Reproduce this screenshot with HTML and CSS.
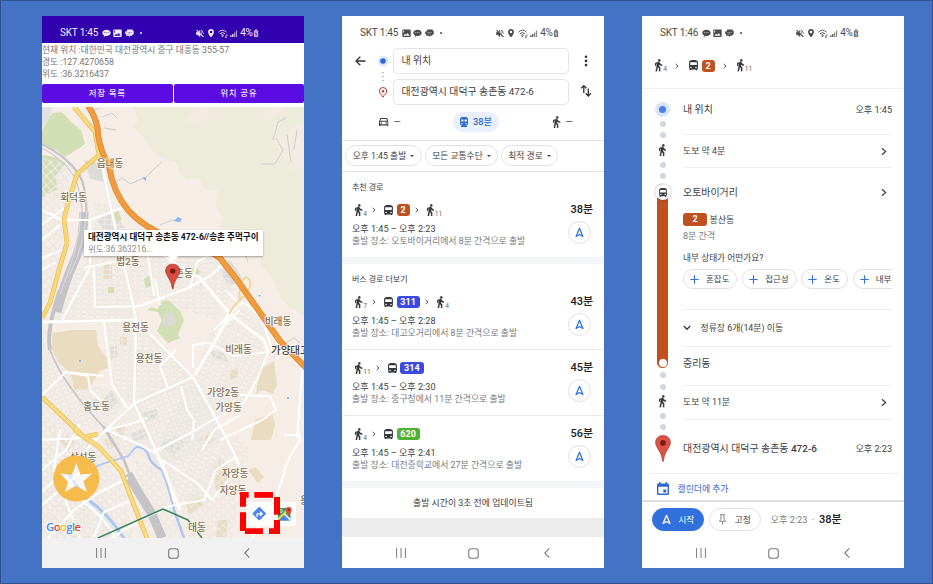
FILE: index.html
```html
<!DOCTYPE html>
<html lang="ko">
<head>
<meta charset="utf-8">
<title>길찾기</title>
<link rel="stylesheet" href="styles.css">
</head>
<body>
<svg class="defs" width="0" height="0" aria-hidden="true">
  <symbol id="walk" viewBox="6 1 13 22"><path d="M13.5 5.5c1.1 0 2-.9 2-2s-.9-2-2-2-2 .9-2 2 .9 2 2 2zM9.8 8.9L7 23h2.1l1.8-8 2.1 2v6h2v-7.5l-2.1-2 .6-3C14.8 12 16.8 13 19 13v-2c-1.9 0-3.5-1-4.3-2.4l-1-1.6c-.4-.6-1-1-1.7-1-.3 0-.5.1-.8.1L6 8.3V13h2V9.6l1.8-.7" stroke="currentColor" stroke-width=".5"/></symbol>
  <symbol id="bus" viewBox="4 2 16 19"><path d="M4 16c0 .88.39 1.67 1 2.22V20c0 .55.45 1 1 1h1c.55 0 1-.45 1-1v-1h8v1c0 .55.45 1 1 1h1c.55 0 1-.45 1-1v-1.78c.61-.55 1-1.34 1-2.22V6c0-3.5-3.58-4-8-4s-8 .5-8 4v10zm3.5 1c-.83 0-1.5-.67-1.5-1.5S6.67 14 7.5 14s1.5.67 1.5 1.5S8.33 17 7.5 17zm9 0c-.83 0-1.5-.67-1.5-1.5s.67-1.5 1.5-1.5 1.5.67 1.5 1.5-.67 1.5-1.5 1.5zm1.5-6H6V6h12v5z"/></symbol>
  <symbol id="car" viewBox="3 5 18 16"><path d="M18.92 6.01C18.72 5.42 18.16 5 17.5 5h-11c-.66 0-1.21.42-1.42 1.01L3 12v8c0 .55.45 1 1 1h1c.55 0 1-.45 1-1v-1h12v1c0 .55.45 1 1 1h1c.55 0 1-.45 1-1v-8l-2.08-5.99zM6.85 7h10.29l1.08 3.11H5.77L6.85 7zM19 17H5v-5h14v5z"/><circle cx="7.5" cy="14.5" r="1.5"/><circle cx="16.5" cy="14.5" r="1.5"/></symbol>
  <symbol id="train" viewBox="4 2 16 20"><path fill-rule="evenodd" d="M12 2c-4 0-8 .5-8 4v9.500C4 17.400 5.600 19 7.500 19L6 20.500v1.500h12v-1.500L16.500 19c1.900 0 3.500-1.600 3.500-3.500V6c0-3.500-4-4-8-4zM7.800 17a1.600 1.600 0 1 1 0-3.200 1.600 1.600 0 0 1 0 3.200zM11 11H6V7h5zm2 0V7h5v4zm3.200 6a1.600 1.600 0 1 1 0-3.200 1.600 1.600 0 0 1 0 3.200z"/></symbol>
  <symbol id="chev" viewBox="0 0 6 8"><path d="M1 .8 4.600 4 1 7.200" fill="none" stroke="currentColor" stroke-width="1.300"/></symbol>
  <symbol id="nav" viewBox="0 0 10 12"><path d="M5 1.300 1.200 10.500 5 8.300l3.800 2.200z" fill="none" stroke="currentColor" stroke-width="1.400" stroke-linejoin="round"/></symbol>
  <symbol id="chat" viewBox="0 0 10 9"><path d="M5 .5C2.300.5.3 2 .3 4c0 1.300.8 2.300 2.100 2.900L2 8.800l2-1.400 1 .1c2.700 0 4.700-1.500 4.700-3.500S7.700.5 5 .5z"/><path class="cut" d="M2.200 3.800h5.600" fill="none" stroke-width=".6" stroke-dasharray="1.300 .7"/></symbol>
  <symbol id="pic" viewBox="0 0 9 8"><path fill-rule="evenodd" d="M1 .3h7q.7 0 .7.700v6q0 .7-.7.700H1Q.3 7.700.3 7V1Q.3.300 1 .3zM1.300 6.500h6.300L5.700 3.700 4.200 5.600 3 4.400zM1.300 1.300v2.400L2.300 2.500 1.900 1.300z"/></symbol>
  <symbol id="msg" viewBox="0 0 10 9"><path d="M2.500.3h6.300L8.300 1.800h1.400v4H8.500L7.800 7.300H5.500l-.8 1.400L4 7.300H1.300V5.300H.2V2.500h1.500z"/><path class="cut" d="M2.500 3.600h5M3 5.300h3" fill="none" stroke-width=".4"/></symbol>
  <symbol id="mute" viewBox="2 2 20 20"><path d="M4.300 3 3 4.300 7.700 9H3v6h4l5 5v-6.700l5.500 5.500L19.700 21 21 19.700 12 10.700zM12 4 9.900 6.100 12 8.200z" stroke="currentColor" stroke-width="1.200"/><path d="M14 8v3l2.500 2.500C16.900 11 16 9 14 8zM14 3.200v2c3 .9 5 3.500 5 6.800l1.500 2C22 9 19 4.500 14 3.200z"/></symbol>
  <symbol id="place" viewBox="5 2 14 20"><path fill-rule="evenodd" d="M12 2C8.130 2 5 5.130 5 9c0 5.250 7 13 7 13s7-7.750 7-13c0-3.870-3.130-7-7-7zm0 10a3 3 0 1 1 0-6 3 3 0 0 1 0 6z"/></symbol>
  <symbol id="wifi" viewBox="0 0 10 9"><path d="M.5 3.200Q4.500-.8 8.500 3.200M1.900 4.800q2.600-2.400 5.200 0M3.200 6.300q1.300-1.200 2.600 0" fill="none" stroke="currentColor" stroke-width=".9"/><circle cx="4.500" cy="7.300" r=".8"/><path d="M7 8.700 7.800 6l.9 2.700zM8.300 5.500h1.300L9 8z"/></symbol>
  <symbol id="signal" viewBox="0 0 9 9"><path d="M.3 6.500h1.400v2H.3zM2.400 5h1.400v3.500H2.400z"/><path d="M4.500 3.300h1.400v5.200H4.500zM6.600 1H8v7.500H6.600z" opacity=".65"/></symbol>
  <symbol id="batt" viewBox="0 0 6 9"><path d="M2 .5h2v1h1.300v7H.7v-7H2z" opacity=".75"/><path class="cut" d="M3.300 2.500 2.300 5h1.500L2.800 7.500" fill="none" stroke-width=".6"/></symbol>
  <symbol id="recents" viewBox="0 0 10 10"><path d="M.6 0v10M5 0v10M9.400 0v10" stroke="currentColor" stroke-width="1"/></symbol>
  <symbol id="home" viewBox="0 0 11 11"><rect x=".7" y=".7" width="9.600" height="9.600" rx="2.600" fill="none" stroke="currentColor" stroke-width="1.100"/></symbol>
  <symbol id="back" viewBox="0 0 6 10"><path d="M5.300.4.8 5l4.500 4.600" fill="none" stroke="currentColor" stroke-width="1.100"/></symbol>
  <symbol id="plus" viewBox="0 0 9 9"><path d="M4.500.3v8.400M.3 4.500h8.400" stroke="currentColor" stroke-width="1.200"/></symbol>
  <symbol id="pin" viewBox="0 0 15 26"><path d="M7.500.4C3.400.4.4 3.400.4 7.300c0 5 5.700 8 6.700 17.900h.8c1-9.900 6.700-12.900 6.700-17.900 0-3.900-3-6.900-7.100-6.900z" stroke-width=".7"/><circle cx="7.500" cy="7.600" r="2.700" fill="#741c14" stroke="none"/></symbol>
</svg>

<main class="board">
  <section class="phone">
    <header class="status status-dark">
      <span class="carrier">SKT 1:45</span>
      <svg class="s-ico"><use href="#chat"/></svg><svg class="s-ico"><use href="#pic"/></svg><svg class="s-ico"><use href="#msg"/></svg><i class="s-dot"></i>
      <span class="s-right"><svg class="w8"><use href="#mute"/></svg><svg class="w6"><use href="#place"/></svg><svg class="w10"><use href="#wifi"/></svg><svg class="w8 sig"><use href="#signal"/></svg><b>4%</b><svg class="w6 bat"><use href="#batt"/></svg></span>
    </header>
    <div class="where"><p>현재 위치 :대한민국 대전광역시 중구 대흥동 355-57</p><p>경도 :127.4270658</p><p>위도 :36.3216437</p></div>
    <div class="actions"><button>저장 목록</button><button>위치 공유</button></div>
    <div class="map">
      <svg class="map-art" viewBox="42 107 262 431">
        <defs>
          <pattern id="g1" width="7" height="5" patternUnits="userSpaceOnUse" patternTransform="rotate(2)"><path d="M0 .7h7M.7 0v5" stroke="#d6d1ca" stroke-width="1.200"/><path d="M0 .7h7M.7 0v5" stroke="#fff" stroke-width=".6"/></pattern>
          <pattern id="g2" width="6" height="5" patternUnits="userSpaceOnUse" patternTransform="rotate(-22)"><path d="M0 .7h6M.7 0v5" stroke="#d6d1ca" stroke-width="1.200"/><path d="M0 .7h6M.7 0v5" stroke="#fff" stroke-width=".6"/></pattern>
          <pattern id="g3" width="6" height="7" patternUnits="userSpaceOnUse" patternTransform="rotate(-42)"><path d="M0 .7h6M.7 0v7" stroke="#d6d1ca" stroke-width="1.200"/><path d="M0 .7h6M.7 0v7" stroke="#fff" stroke-width=".6"/></pattern>
          <pattern id="g4" width="7" height="5" patternUnits="userSpaceOnUse" patternTransform="rotate(28)"><path d="M0 .7h7M.7 0v5" stroke="#d6d1ca" stroke-width="1.200"/><path d="M0 .7h7M.7 0v5" stroke="#fff" stroke-width=".6"/></pattern>
        </defs>
        <rect x="42" y="107" width="262" height="431" fill="#f5ede6"/>
        <path fill="#edebda" d="M133 107 138 120 134 128 146 140 152 150 163 158 176 162 180 174 188 180 199 178 205 190 218 190 216 207 223 218 218 227 250 232 258 245 262 265 274 280 279 296 290 308 304 314V107z"/>
        <path fill="#f3ebe2" d="M274 140 304 120V165L292 172 284 158zM286 107l-16 14-8-2 6-12zM216 107l-6 12-18 4-8 0 12-16z"/>
        <path fill="#d2dfb5" d="M42 130 52 113 62 112 71 122 81 130 85 144 76 150 65 157 56 150 42 143zM42 155 55 157 66 163 56 175 57 190 48 194 42 198z"/>
        <path fill="#e2e0e3" d="M42 107h10l-3 12-7 8z"/>
        <path fill="#eadcc0" d="M52 333 70 330 84 330 96 330 98 346 107 358 108 368 100 371 92 384 88 390 74 390 71 374 58 362 52 350zM120 337h7v8h-7zM103 264h9v16h-9zM230 371l8-4 0 10-8 3zM259 370 274 361 277 385 273 394 262 390 256 394zM255 420 272 413 275 425 271 440h-20zM117 426h8l-2 12h-6zM196 440l12-8 8 6-8 8zM213 473 220 456 229 470 224 492 216 489zM248 470l8-3 8 10-6 6zM186 503l14-6 3 8-14 10zM218 520h10l-2 17h-10zM58 440l10-5 8 8-8 8zM104 440l8-4 5 8-8 6z"/>
        <path fill="#dedcd9" d="M97 220 114 212 125 228 104 230zM220 270l10-10 14 20-16 6zM84 160l20 4 2 18-16-3zM210 350l14 3 5 9-16-4zM103 400l8-10 7 12-8 8zM143 413l14-4 1 9-14 5zM130 434l16-6 3 10-14 3zM84 403l14-6 4 8-16 4zM160 445l14-10 12 8-14 14zM110 347l7-2 1 12-7 2z"/>
        <path fill="url(#g3)" d="M42 158 72 165 66 218 58 290 42 305zM42 400 92 440 120 470 134 538H42z"/>
        <path fill="url(#g1)" d="M94 200 112 208 126 230 165 245 220 258 234 290 215 320 140 295 130 318 42 322 56 300 64 285 95 250z"/>
        <path fill="url(#g1)" d="M103 322 138 322 193 377 135 403 116 398z"/>
        <path fill="url(#g2)" d="M42 330 52 326 54 358 72 376 72 390 104 386 124 402 106 430 70 425 42 390zM135 404 193 379 214 418 228 440 160 470 140 455 118 465 100 440z"/>
        <path fill="url(#g4)" d="M210 330 238 306 262 325 270 350 258 380 240 410 215 416 195 378zM193 378 214 420 228 440 222 470 200 500 180 500 162 460 160 440z"/>
        <path fill="url(#g3)" d="M136 460 160 470 182 538H140zM182 500 220 455 236 430 250 450 232 538H190zM42 418 84 440 100 450 112 538H42z" opacity=".9"/>
        <path fill="#d2dfb5" d="M147 310 151 307 158 309 160 302 168 300 180 311 184 320 178 334 180 338 168 343 157 331 162 320 158 312zM112 212l6-2 4 10-5 2zM108 287h6v6h-6zM144 279l6-3 2 10-6 2zM188 273l7-6 6 5-7 6z"/>
        <path fill="#dcdad7" d="M163 315 172 311 176 323 164 328z"/>
        <g fill="none" stroke="#c4c3c7">
          <path d="M42 144Q66 156 79 174 88 190 86 222" stroke-width="2.200"/><path d="M42 148Q62 158 74 176 82 192 83 224" stroke-width="1"/>
          <path d="M84 212Q84 240 74 262 64 284 57 312" stroke-width="9"/><path d="M60 290Q46 330 50 350" stroke-width="4"/><path d="M50 350Q62 384 110 434" stroke-width="1.600"/>
          <path d="M103 426 124 460 134 486" stroke-width="2.600"/><path d="M128 474 137 490 152 514 162 538" stroke-width="9"/>
        </g>
        <g fill="none" stroke="#dedce0" stroke-width="1"><path d="M87 210Q84 246 70 274M81 212Q80 246 60 294"/></g>
        <g fill="none" stroke="#cbcac8" stroke-width=".9">
          <path d="M112 184 122 178 130 184 146 177 155 168 162 162M102 117 112 113 117 118M104 128 116 130M273 140 278 122 286 118M276 138 283 150 275 164 262 164M287 134 291 162M297 130 294 150M90 112 100 108M160 225 172 220 182 222M236 246 244 250 248 262M284 344 294 338 300 343"/>
        </g>
        <g fill="none" stroke="#a9c6f5" stroke-width="2.400"><path d="M136 447Q144 446 148 454 150 464 162 470 170 490 174 510L184 538" /><path d="M68 472Q78 490 91 502 108 514 124 538" stroke-width="3"/><path d="M80 474 102 464 128 456 136 447" stroke-width="1.600"/></g>
        <path fill="#8ab4f8" d="M142 178l4-1v4zM174 221l4-4 4 2-3 3zM258 295l3 0-1 2zM79 360h2v2h-2zM287 397h2v2h-2z"/>
        <g fill="none" stroke="#d9d4cd" stroke-width="3.200">
          <path d="M42 322 136 320 193 377 135 403 106 430 76 460 42 492M193 377 214 415 236 457M136 320 131 295 118 240 106 185 102 162M136 320 134 403 155 448"/>
        </g>
        <g fill="none" stroke="#fff" stroke-linejoin="round">
          <path stroke-width="2.800" d="M42 322 136 320 193 377 135 403 106 430 76 460 42 492M193 377 214 415 236 457 242 475M195 375 213 345 232 310M136 320 131 295 118 240 106 185 102 162M136 320 134 403 155 448 180 510M146 239 172 262 200 278 229 313 250 330 264 340 268 352"/>
          <path stroke-width="2" d="M64 220 90 220 122 208M42 210 62 220 M42 225 64 208M42 240 60 225M42 258 62 250M42 270 56 262M90 220 90 268 62 320M84 268 132 258 152 244M94 268 95 307 140 306 188 288 210 276 226 262M146 244 154 296M160 305 155 280M190 288 197 262 222 248M104 322 112 384 127 408M176 350 160 366 168 388M181 386 187 410 194 420 192 440M193 368 193 345 209 343 234 356 268 352M268 352 258 378 244 402 192 432 154 452 130 440 106 430M42 395 66 372 88 376 90 390 104 404M66 372 104 376M240 302 246 304 262 318 272 350M225 290 242 306M214 330 238 306M218 332 240 310M42 440 84 438 M106 430 130 424 148 418M276 350 298 345 302 372 300 400 297 438M284 435h16M284 345 276 360M298 430 300 440 288 460 278 492 262 520 252 538M236 457 216 470 204 500 170 506 140 520 112 538M174 502 168 480 162 460M162 460 196 482 212 500 236 470M42 505 72 480 90 462M48 538 74 510 100 492 128 478M60 430 54 470 80 538M80 424 66 450 42 470M220 440 262 420 276 410 270 396 240 395M202 450 214 430 240 415M94 537 104 512 132 500"/>
        </g>
        <path d="M66 478Q76 497 91 508 104 518 116 538" fill="none" stroke="#fff" stroke-width="2"/>
        <g fill="none" stroke-linejoin="round">
          <path stroke="#e5b95b" stroke-width="4.600" d="M74 107 95 132 99 155 77 174 69 200 64 219 67 243 59 270 50 303 42 318M42 397 84 437 99 447 121 471 133 503 147 538M84 437 98 434M74 430 84 437"/>
          <path stroke="#fad775" stroke-width="3.400" d="M74 107 95 132 99 155 77 174 69 200 64 219 67 243 59 270 50 303 42 318M42 397 84 437 99 447 121 471 133 503 147 538M84 437 98 434M74 430 84 437"/>
          <path stroke="#f7e2a0" stroke-width=".8" d="M74 107 95 132 99 155M42 397 84 437 99 447 121 471 133 503 147 538"/>
          <path stroke="#edd795" stroke-width="1.800" d="M229 314Q236 302 247 294M240 302q-2-20 6-25 8 4 2 14"/>
          <path stroke="#d98631" stroke-width="6" d="M87 104Q98 120 98 134 100 150 109 166 113 192 128 210 142 226 170 238 205 247 220 258 238 280 254 304L280 341 306 368"/>
          <path stroke="#f29b3c" stroke-width="4.600" d="M87 104Q98 120 98 134 100 150 109 166 113 192 128 210 142 226 170 238 205 247 220 258 238 280 254 304L280 341 306 368"/>
          <path stroke="#38855f" stroke-width="1.400" d="M98 538 163 509 188 520 202 538"/>
        </g>
        <g class="lbl">
          <text x="110" y="167">읍내동</text><text x="73.500" y="200.500">회덕동</text><text x="128" y="265">법2동</text><text x="179.500" y="276.500">송촌동</text>
          <text x="135.500" y="331">용전동</text><text x="149" y="361.800">용전동</text><text x="278" y="324.500">비래동</text><text x="238.500" y="352.700">비래동</text>
          <text class="big" x="271" y="353.500">가양대고</text><text x="223" y="396">가양2동</text><text x="228.500" y="411">가양동</text><text x="96.500" y="410">홍도동</text>
          <text x="83" y="461">삼성동</text><text x="235" y="477">자양동</text><text x="233" y="493.500">자양동</text><text x="197" y="531">대동</text><text x="304.500" y="504">용</text>
        </g>
        <path d="M76 463 80 474.500 92 474.500 83 482 87 492 76 485.500 65 492 69 482 60 474.500 72 474.500z" fill="#fff" opacity=".6"/>
        <path fill-rule="evenodd" fill="#f5bc4c" d="M76.300 455.500a23 23 0 1 0 .1 0zM76.300 463 80.500 474.500 92 473.500 83.500 481.500 87 492 75.500 486 65 492 68 482 60.500 473.500 72 474.500z"/>
        <g class="google"><text x="46" y="530.500"><tspan fill="#4285f4">G</tspan><tspan fill="#ea4335">o</tspan><tspan fill="#fbbc05">o</tspan><tspan fill="#4285f4">g</tspan><tspan fill="#34a853">l</tspan><tspan fill="#ea4335">e</tspan></text></g>
        <use href="#pin" x="165" y="263.500" width="15.500" height="26" fill="#d94c3e" stroke="#a93226"/>
        <rect x="247" y="502" width="49" height="24" fill="#fff" opacity=".88"/>
        <rect x="253.900" y="508.900" width="10" height="10" rx="1" fill="#4a82ee" transform="rotate(45 259.400 514.200)"/>
        <path d="M257 517v-3.200h4.500M260 511.600l2.300 2.200-2.300 2.200" fill="none" stroke="#fff" stroke-width="1.200"/>
        <g><rect x="278" y="508" width="12.500" height="12.500" rx="1" fill="#34a05c"/><path d="M279 520.500 284.500 514 290.500 520.500z" fill="#4a82ee"/><path d="M278 519.500 288 509.500" stroke="#fbd24a" stroke-width="2"/><path d="M284.500 514 290.500 520" stroke="#e8eaed" stroke-width="1.800"/><path d="M288.700 507a3 3 0 0 1 3 3c0 2.500-2.600 3.800-3 6.500-.4-2.700-3-4-3-6.500a3 3 0 0 1 3-3z" fill="#dd4b3e"/><circle cx="288.700" cy="510" r="1" fill="#7c1d15"/><circle cx="281" cy="511" r="1.400" fill="none" stroke="#fff" stroke-width=".7"/></g>
        <path fill="#f00" d="M240 492h8.700v5.700H246V506.700h-6zM254.300 492H273v5.700H254.300zM274 497h6v17.700h-6zM280 520v14h-11v-5.700h5V520zM263 534H245v-3h-5V512.300h6v16h17z"/>
      </svg>
      <div class="bubble"><strong>대전광역시 대덕구 송촌동 472-6//송촌 주먹구이</strong><span>위도:36.363216...</span></div>
    </div>
    <footer class="sysnav grey"><svg class="n1"><use href="#recents"/></svg><svg class="n2"><use href="#home"/></svg><svg class="n3"><use href="#back"/></svg></footer>
  </section>

  <section class="phone">
    <header class="status">
      <span class="carrier">SKT 1:45</span>
      <svg class="s-ico"><use href="#pic"/></svg><svg class="s-ico"><use href="#chat"/></svg><svg class="s-ico"><use href="#msg"/></svg><i class="s-dot"></i>
      <span class="s-right"><svg class="w8"><use href="#mute"/></svg><svg class="w6"><use href="#place"/></svg><svg class="w10"><use href="#wifi"/></svg><svg class="w8 sig"><use href="#signal"/></svg><b>4%</b><svg class="w6 bat"><use href="#batt"/></svg></span>
    </header>
    <div class="search">
      <div class="ends">
        <svg class="arrow" viewBox="0 0 11 10"><path d="M10.500 5H1.200M5.300.8 1 5l4.300 4.200" fill="none" stroke="#333" stroke-width="1.300"/></svg>
        <svg class="marks" viewBox="0 0 12 50"><circle cx="6" cy="9" r="5.400" fill="#dfe9fc"/><circle cx="6" cy="9" r="2.800" fill="#2a66dc"/><path d="M6 20v1.300M6 24v1.300M6 28v1.300" stroke="#999" stroke-width="1.200"/><path d="M6 35.500a3.700 3.700 0 0 1 3.700 3.700c0 2.600-2.700 3.500-3.700 6-1-2.500-3.700-3.400-3.700-6A3.700 3.700 0 0 1 6 35.500z" fill="none" stroke="#c5372c" stroke-width="1"/><circle cx="6" cy="39.200" r="1.200" fill="#c5372c"/></svg>
        <div class="fields"><div class="field">내 위치</div><div class="field">대전광역시 대덕구 송촌동 472-6</div></div>
        <svg class="tools" viewBox="0 0 12 50"><circle cx="6" cy="4.700" r="1.300"/><circle cx="6" cy="8.900" r="1.300"/><circle cx="6" cy="13.100" r="1.300"/><path d="M3.800 41V33.500M1.200 36.300l2.600-2.700 2.600 2.700M8.300 36.500V44M5.700 41.300l2.600 2.700 2.600-2.700" fill="none" stroke="#333" stroke-width="1.300"/></svg>
      </div>
      <div class="modes"><span class="mode"><svg class="i-car"><use href="#car"/></svg>—</span><span class="mode on"><svg class="i-train"><use href="#train"/></svg>38분</span><span class="mode"><svg class="i-walk"><use href="#walk"/></svg>—</span></div>
    </div>
    <div class="filters"><span class="f1">오후 1:45 출발<i></i></span><span class="f2">모든 교통수단<i></i></span><span class="f3">최적 경로<i></i></span></div>
    <div class="card"><h2>추천 경로</h2>
      <div class="trip"><div class="info"><div class="legs"><svg class="i-walk"><use href="#walk"/></svg><sub>4</sub><svg class="i-chev"><use href="#chev"/></svg><svg class="i-bus"><use href="#bus"/></svg><b class="no rust">2</b><svg class="i-chev"><use href="#chev"/></svg><svg class="i-walk"><use href="#walk"/></svg><sub>11</sub></div><p class="when">오후 1:45 – 오후 2:23</p><p class="from">출발 장소: 오토바이거리에서 8분 간격으로 출발</p></div><div class="go"><strong>38분</strong><span><svg><use href="#nav"/></svg></span></div></div>
    </div>
    <div class="band"></div>
    <div class="card"><h2>버스 경로 더보기</h2>
      <div class="trip"><div class="info"><div class="legs"><svg class="i-walk"><use href="#walk"/></svg><sub>7</sub><svg class="i-chev"><use href="#chev"/></svg><svg class="i-bus"><use href="#bus"/></svg><b class="no blue">311</b><svg class="i-chev"><use href="#chev"/></svg><svg class="i-walk"><use href="#walk"/></svg><sub>4</sub></div><p class="when">오후 1:45 – 오후 2:28</p><p class="from">출발 장소: 대고오거리에서 8분 간격으로 출발</p></div><div class="go"><strong>43분</strong><span><svg><use href="#nav"/></svg></span></div></div>
    </div>
    <div class="card line">
      <div class="trip"><div class="info"><div class="legs"><svg class="i-walk"><use href="#walk"/></svg><sub>11</sub><svg class="i-chev"><use href="#chev"/></svg><svg class="i-bus"><use href="#bus"/></svg><b class="no blue">314</b></div><p class="when">오후 1:45 – 오후 2:30</p><p class="from">출발 장소: 중구청에서 11분 간격으로 출발</p></div><div class="go"><strong>45분</strong><span><svg><use href="#nav"/></svg></span></div></div>
    </div>
    <div class="card line">
      <div class="trip"><div class="info"><div class="legs"><svg class="i-walk"><use href="#walk"/></svg><sub>4</sub><svg class="i-chev"><use href="#chev"/></svg><svg class="i-bus"><use href="#bus"/></svg><b class="no green">620</b></div><p class="when">오후 1:45 – 오후 2:41</p><p class="from">출발 장소: 대전중학교에서 27분 간격으로 출발</p></div><div class="go"><strong>56분</strong><span><svg><use href="#nav"/></svg></span></div></div>
    </div>
    <div class="band"></div>
    <p class="updated">출발 시간이 3초 전에 업데이트됨</p>
    <div class="filler"></div>
    <footer class="sysnav"><svg class="n1"><use href="#recents"/></svg><svg class="n2"><use href="#home"/></svg><svg class="n3"><use href="#back"/></svg></footer>
  </section>

  <section class="phone">
    <header class="status">
      <span class="carrier">SKT 1:46</span>
      <svg class="s-ico"><use href="#chat"/></svg><svg class="s-ico"><use href="#pic"/></svg><svg class="s-ico"><use href="#msg"/></svg><i class="s-dot"></i>
      <span class="s-right"><svg class="w8"><use href="#mute"/></svg><svg class="w6"><use href="#place"/></svg><svg class="w10"><use href="#wifi"/></svg><svg class="w8 sig"><use href="#signal"/></svg><b>4%</b><svg class="w6 bat"><use href="#batt"/></svg></span>
    </header>
    <div class="summary legs wide"><svg class="i-walk"><use href="#walk"/></svg><sub>4</sub><svg class="i-chev"><use href="#chev"/></svg><svg class="i-bus"><use href="#bus"/></svg><b class="no rust">2</b><svg class="i-chev"><use href="#chev"/></svg><svg class="i-walk"><use href="#walk"/></svg><sub>11</sub></div>
    <div class="detail">
      <div class="rail">
        <span class="start"></span><i></i><i></i><svg class="i-walk"><use href="#walk"/></svg><i></i><i></i>
        <div class="bar"><span class="stop"><svg class="i-bus"><use href="#bus"/></svg></span><span class="end"></span></div>
        <i></i><i></i><svg class="i-walk"><use href="#walk"/></svg><i></i><i></i>
        <svg class="dest"><use href="#pin"/></svg>
      </div>
      <div class="steps">
        <div class="step s1"><strong>내 위치</strong><time>오후 1:45</time></div>
        <div class="step s2"><span>도보 약 4분</span><svg class="more"><use href="#chev"/></svg></div>
        <div class="step s3"><strong>오토바이거리</strong><svg class="more"><use href="#chev"/></svg></div>
        <div class="ride">
          <div class="bound"><b class="no rust">2</b>봉산동</div>
          <p class="every">8분 간격</p>
          <p class="ask">내부 상태가 어떤가요?</p>
          <div class="tags"><span><svg><use href="#plus"/></svg>혼잡도</span><span><svg><use href="#plus"/></svg>접근성</span><span><svg><use href="#plus"/></svg>온도</span><span class="last"><svg><use href="#plus"/></svg>내부</span></div>
        </div>
        <div class="step s4"><svg class="down" viewBox="0 0 8 6"><path d="m.7.900 3.300 3.400L7.300.900" fill="none" stroke="#333" stroke-width="1.300"/></svg><span>정류장 6개(14분) 이동</span></div>
        <div class="step s5"><strong>중리동</strong></div>
        <div class="step s6"><span>도보 약 11분</span><svg class="more"><use href="#chev"/></svg></div>
        <div class="step s7"><strong>대전광역시 대덕구 송촌동 <b>472-6</b></strong><time>오후 2:23</time></div>
      </div>
    </div>
    <div class="calendar"><svg viewBox="0 0 12 13"><path fill-rule="evenodd" d="M2 0h1.500v1.500h5V0H10v1.500h.8q1.200 0 1.200 1.200v9q0 1.200-1.200 1.200H1.200Q0 12.900 0 11.700v-9Q0 1.500 1.200 1.500H2zM1.400 4.700v6.800h9.200V4.700zM6.300 7.400h3v3h-3z"/></svg>캘린더에 추가</div>
    <div class="dock"><span class="btn primary"><svg><use href="#nav"/></svg>시작</span><span class="btn"><svg viewBox="0 0 8 11"><path d="M1.800.7h4.400M2.500.7v4.500L1 7.300h6L5.500 5.200V.7M4 7.300v3.400" fill="none" stroke="#80868b" stroke-width="1"/></svg>고정</span><span class="eta">오후 2:23 <em>·</em></span><strong>38분</strong></div>
    <footer class="sysnav"><svg class="n1"><use href="#recents"/></svg><svg class="n2"><use href="#home"/></svg><svg class="n3"><use href="#back"/></svg></footer>
  </section>
</main>
</body>
</html>
```
FILE: styles.css
```css
* { box-sizing: border-box; }
body, p, h2, button { margin: 0; padding: 0; }
body {
  width: 933px; height: 584px; overflow: hidden;
  background: #4472c4; color: #3c4043;
  font-family: Roboto, "Noto Sans CJK KR", sans-serif;
  font-size: 9px; line-height: 12px;
}
svg { display: block; flex: none; fill: currentColor; }
i, em { font-style: normal; }
.defs { position: absolute; }
.board { display: flex; gap: 38px; width: 933px; height: 584px; padding: 15px 41px; border: 1px solid #2f528f; }
.phone { width: 262px; height: 552px; background: #fff; display: flex; flex-direction: column; overflow: hidden; flex: none; }

.status { --cut: #fff; height: 27px; flex: none; display: flex; align-items: center; padding: 7px 0 0 18px; color: #4a4a4a; }
.status-dark { --cut: #3300b0; background: #3300b0; color: #f0ecfa; }
.cut { stroke: var(--cut); }
.carrier { width: 41.500px; font-size: 10px; letter-spacing: -.2px; white-space: nowrap; }
.s-ico { width: 9px; height: 8.500px; margin-right: 2.700px; }
.s-dot { width: 2px; height: 2px; border-radius: 50%; background: currentColor; margin-left: 3px; }
.s-right { display: flex; align-items: center; margin-left: auto; padding-right: 45px; }
.s-right b { font-weight: 400; font-size: 10px; letter-spacing: -.4px; margin-left: 2px; }
.w8 { width: 8px; height: 9px; } .w6 { width: 6px; height: 8.500px; margin-left: 3.500px; } .w10 { width: 10px; height: 9px; margin-left: 4.500px; }
.sig { margin-left: 2px; } .bat { margin-left: .5px; }

.where { height: 41px; flex: none; color: #757575; font-size: 8.750px; line-height: 12.400px; padding-top: .6px; white-space: nowrap; }
.actions { display: flex; gap: 1px; height: 23px; flex: none; }
.actions button { flex: 1; height: 19px; border: 0; border-radius: 2px; background: #5a0ce2; color: #ece4fb; font: 500 8.500px/19px Roboto, "Noto Sans CJK KR", sans-serif; letter-spacing: .7px; }
.map { position: relative; flex: none; height: 431px; }
.map-art { width: 262px; height: 431px; }
.lbl { font-family: Roboto, "Noto Sans CJK KR", sans-serif; font-size: 9.700px; fill: #796d58; text-anchor: middle; font-weight: 500; paint-order: stroke; stroke: #fffaf4; stroke-width: 1.500px; }
.lbl .big { font-size: 10.500px; fill: #463e35; text-anchor: start; }
.google { font: 600 11.500px/1 "Open Sans", sans-serif; letter-spacing: -.7px; paint-order: stroke; stroke: #fff; stroke-width: 1.500px; }
.bubble { position: absolute; left: 42px; top: 123px; width: 178.500px; height: 26px; padding: 2px 4px; background: #fff; box-shadow: 0 1px 2px rgba(0,0,0,.35); display: flex; flex-direction: column; line-height: 11.500px; white-space: nowrap; }
.bubble::after { content: ""; position: absolute; left: 84px; top: 26px; border: 5px solid transparent; border-top: 6px solid #fff; border-bottom: 0; }
.bubble strong { color: #111; font-size: 8.560px; }
.bubble span { color: #8c8c8c; font-size: 8.500px; }

.sysnav { margin-top: auto; height: 30px; flex: none; display: flex; align-items: center; padding-left: 53.500px; color: #7c7c7c; background: #fff; }
.grey { background: #f1f1f1; }
.n1 { width: 10px; height: 10px; } .n2 { width: 11px; height: 11px; margin-left: 62.500px; } .n3 { width: 6px; height: 10px; margin-left: 65px; }

.search { height: 98px; flex: none; border-bottom: 1px solid #e3e4e6; padding-top: 5px; }
.ends { display: flex; padding-left: 12.500px; }
.arrow { width: 11px; height: 10px; margin-top: 8px; }
.marks { width: 12px; height: 50px; margin: 4px 4px 0 11px; }
.fields { width: 176px; display: grid; gap: 5px; }
.field { height: 26px; border: 1.500px solid #e3e4e6; border-radius: 5px; padding-left: 8px; line-height: 24px; font-size: 9.900px; white-space: nowrap; }
.tools { width: 12px; height: 50px; margin: 4px 0 0 11.500px; fill: #333; }
.modes { display: flex; align-items: center; height: 20px; margin-top: 7px; padding-left: 37px; }
.mode { display: flex; flex: none; align-items: center; gap: 5px; font-size: 9.500px; width: 74px; }
.mode:last-child { width: auto; }
.mode.on { width: 46px; height: 20px; margin-right: 54px; border-radius: 10px; background: #e8f0fe; color: #3068cf; justify-content: center; font-size: 9.300px; font-weight: 500; }
.i-car { width: 9.500px; height: 8.500px; } .i-train { width: 8px; height: 10px; }
.filters { display: flex; gap: 3px; height: 31px; flex: none; padding: 4px 0 0 3px; border-bottom: 1.500px solid #dfe1e3; }
.filters span { height: 21px; border: 1px solid #dfe1e4; border-radius: 11px; display: flex; align-items: center; justify-content: center; gap: 4px; font-size: 8.750px; white-space: nowrap; }
.filters i { border: 2.500px solid transparent; border-top: 2.700px solid #444; border-bottom: 0; }
.f1 { width: 77px; } .f2 { width: 73px; } .f3 { width: 57px; }

.card { flex: none; padding: 10px 10px 0; height: 65px; }
.card h2 { font-size: 8px; font-weight: 400; line-height: 14px; margin: -1px 0 7px; }
.card:has(h2) { height: 85px; }
.line { border-top: 1px solid #e8eaec; height: 66px; }
.trip { display: flex; justify-content: space-between; }
.legs { display: flex; align-items: center; height: 16px; padding-left: 3px; color: #35383b; }
.i-walk { width: 7.500px; height: 12.600px; } .i-bus { width: 9px; height: 10.500px; }
.i-chev { width: 4px; height: 6px; margin: 0 8px 0 5px; color: #444; }
.legs sub { font-size: 6.600px; line-height: 8px; margin: 7px 0 0 .8px; color: #5f6368; vertical-align: baseline; }
.no { min-width: 13px; height: 12px; border-radius: 3px; color: #fff; font-size: 9px; line-height: 12.500px; text-align: center; font-weight: 700; }
.legs .no { margin-left: 3.500px; padding: 0 3.800px; letter-spacing: .1px; }
.rust { background: #c0501f; } .blue { background: #3b4be2; } .green { background: #4fb233; }
.when { font-size: 9.100px; margin-top: 5px; white-space: nowrap; }
.from { font-size: 8.900px; color: #777b80; white-space: nowrap; }
.go { display: flex; flex-direction: column; align-items: flex-end; }
.go strong { font-size: 11px; line-height: 16px; font-weight: 500; color: #202124; margin-right: 1px; }
.go span { width: 23px; height: 23px; margin: 2.500px 3.500px 0 0; border: 1px solid #dfe1e4; border-radius: 50%; color: #3273dc; display: grid; place-items: center; }
.go svg { width: 9px; height: 11px; }
.band { height: 7px; flex: none; background: #f5f6f8; }
.updated { height: 30px; flex: none; line-height: 31px; text-align: center; font-size: 8.900px; }
.filler { height: 18.500px; flex: none; background: #ececec; }

.summary { height: 46px; flex: none; padding: 0 0 0 13px; border-bottom: 1px solid #eef0f1; }
.wide .i-chev { margin: 0 10px 0 8px; }
.detail { display: flex; height: 385px; flex: none; border-bottom: 1px solid #eceef0; margin: 0 5px; }
.rail { width: 36px; padding: 13px 5px 0 0; display: flex; flex-direction: column; align-items: center; }
.rail > i { width: 6px; height: 6px; border-radius: 50%; background: #cfd8dc; margin-bottom: 5.400px; flex: none; }
.rail > .i-walk { margin: 0 0 5.500px; color: #35383b; }
.start { width: 15px; height: 15px; border-radius: 50%; border: 4px solid #d9e5fc; background: #4a80ee; margin-bottom: 4px; flex: none; }
.bar { width: 11px; height: 184px; border-radius: 5.500px; background: #c1501f; display: flex; flex-direction: column; justify-content: space-between; align-items: center; margin: -.5px 0 4px; padding-bottom: 1.500px; flex: none; }
.stop { width: 16px; height: 16px; border-radius: 50%; background: #fff; box-shadow: 0 0 2px rgba(0,0,0,.4); display: grid; place-items: center; flex: none; }
.stop svg { width: 8px; height: 9.300px; }
.end { width: 8px; height: 8px; border-radius: 50%; background: #fff; }
.dest { width: 16px; height: 27px; margin-top: -.5px; fill: #dc5146; stroke: #b23a30; }
.steps { width: 209px; }
.step { display: flex; align-items: center; border-bottom: 1px solid #eceef0; white-space: nowrap; font-size: 8.900px; }
.step strong { font-weight: 400; font-size: 9.950px; }
.step strong b { font-weight: 500; }
.step time { margin-left: auto; font-size: 9.100px; }
.more { width: 6px; height: 9px; margin: 0 5px 0 auto; color: #444; }
.s1 { height: 46px; padding-bottom: 3px; } .s2 { height: 33px; }
.s3 { height: 36px; padding-top: 13px; border: 0; }
.ride { height: 106px; padding-top: 9px; border-bottom: 1px solid #eceef0; }
.bound { display: flex; align-items: center; gap: 2.500px; height: 13px; }
.bound .no { width: 24px; height: 12.500px; }
.every { color: #777b80; margin-top: 4px; }
.ask { font-size: 8.700px; margin-top: 10px; }
.tags { display: flex; gap: 4.700px; margin-top: 5px; overflow: hidden; }
.tags span { height: 20px; border: 1px solid #dfe1e4; border-radius: 10px; display: flex; align-items: center; gap: 7px; padding: 0 7px 0 6px; font-size: 8.500px; flex: none; white-space: nowrap; }
.tags .last { flex: 1; border-right: 0; border-radius: 10px 0 0 10px; padding-right: 0; }
.tags svg { width: 9px; height: 9px; color: #3273dc; }
.s4 { height: 37px; } .down { width: 8px; height: 6px; margin-right: 9.500px; }
.s5 { height: 39px; padding-bottom: 4px; } .s6 { height: 34px; padding-bottom: 1px; }
.s7 { height: 54px; padding-top: 4px; border: 0; }
.calendar { height: 26px; flex: none; display: flex; align-items: center; gap: 9px; padding: 3px 0 0 14.500px; color: #3068cf; font-size: 8.850px; }
.calendar svg { width: 12px; height: 13px; }
.dock { height: 36px; flex: none; border-top: 2px solid #dcdee0; display: flex; align-items: center; padding: 1px 0 0 10px; }
.btn { width: 52px; height: 23px; border: 1px solid #dfe1e4; border-radius: 12px; display: flex; align-items: center; justify-content: center; gap: 7.500px; font-size: 8.800px; font-weight: 400; margin-right: 4.500px; }
.btn svg { width: 9px; height: 11px; }
.primary { background: #3170dd; border-color: #3170dd; color: #fff; }
.eta { margin-left: 5.500px; font-size: 9.200px; color: #777b80; white-space: pre; }
.eta em { margin: 0 3px 0 2px; }
.dock strong { font-size: 11px; font-weight: 500; color: #202124; margin-left: 2px; }
```
